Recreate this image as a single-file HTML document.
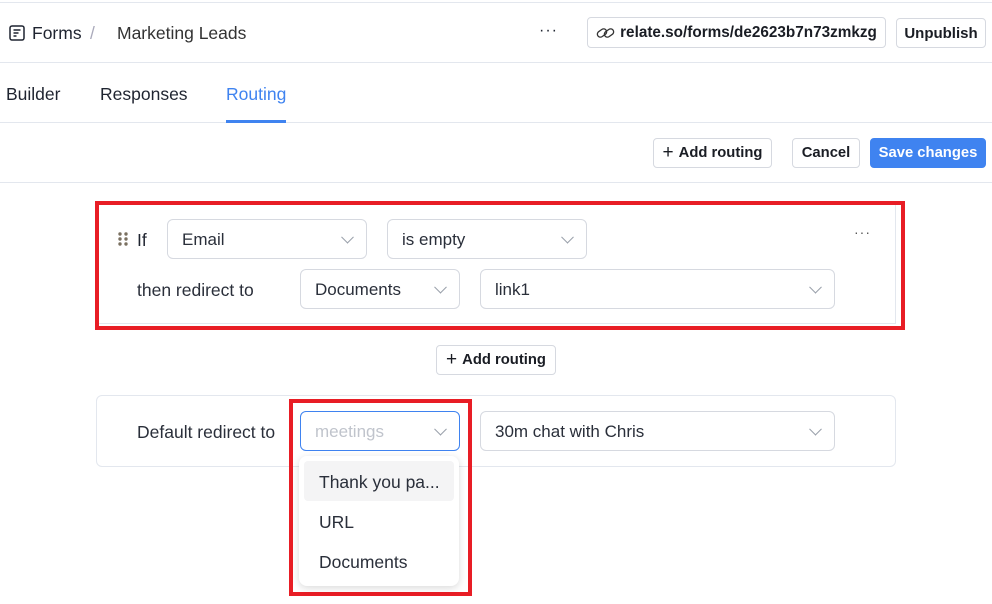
<!DOCTYPE html>
<html><head><style>
*{box-sizing:border-box;margin:0;padding:0}
body{width:992px;height:604px;background:#fff;font-family:"Liberation Sans",sans-serif;color:#1f2430;position:relative;overflow:hidden;font-size:16px}
.a{position:absolute}
.line{position:absolute;left:0;width:992px;height:1px;background:#e3e7ee}
.btn{position:absolute;border:1px solid #d6d9e0;border-radius:4px;background:#fff;font-weight:bold;font-size:14.8px;display:flex;align-items:center;justify-content:center;color:#1a1d24}
.sel{position:absolute;border:1px solid #d6d9e0;border-radius:6px;background:#fff;display:flex;align-items:center;padding-left:14px;font-size:17px;color:#2a2f3a;padding-top:1px}
.chev{position:absolute;right:14px;top:50%;width:9px;height:9px;border-right:1.3px solid #9aa0ab;border-bottom:1.3px solid #9aa0ab;transform:translateY(-70%) rotate(45deg)}
.t{font-size:17.5px}
</style></head><body>
<div class="line" style="top:2px"></div>
<div class="line" style="top:62px"></div>
<div class="line" style="top:122px"></div>
<div class="line" style="top:182px"></div>
<svg class="a" style="left:9px;top:25px" width="16" height="16" viewBox="0 0 16 16"><rect x="1" y="1" width="14" height="14" rx="2" fill="none" stroke="#1f2430" stroke-width="1.5"/><path d="M4.5 5h7M4.5 8h5M4.5 11h3" stroke="#1f2430" stroke-width="1.4"/></svg>
<div class="a t" style="left:32px;top:23px">Forms</div>
<div class="a t" style="left:90px;top:23px;color:#aab">/</div>
<div class="a t" style="left:117px;top:23px;color:#333">Marketing Leads</div>
<div class="a" style="left:539px;top:22px;font-size:16px;letter-spacing:1px">···</div>
<div class="btn" style="left:587px;top:17px;width:299px;height:31px;font-size:15.3px"><svg width="20" height="14" viewBox="0 0 20 14" style="margin-right:4px"><g fill="none" stroke="#333" stroke-width="1.3"><rect x="1" y="4" width="10" height="6" rx="3" transform="rotate(-35 6 7)"/><rect x="8" y="4" width="10" height="6" rx="3" transform="rotate(-35 13 7)"/></g></svg>relate.so/forms/de2623b7n73zmkzg</div>
<div class="btn" style="left:896px;top:18px;width:90px;height:30px;font-size:15px">Unpublish</div>
<div class="a t" style="left:6px;top:84px">Builder</div>
<div class="a t" style="left:100px;top:84px">Responses</div>
<div class="a t" style="left:226px;top:84px;color:#3f83f0">Routing</div>
<div class="a" style="left:226px;top:120px;width:60px;height:3px;background:#3f83f0"></div>
<div class="btn" style="left:653px;top:138px;width:119px;height:30px"><span style="font-weight:normal;font-size:19px;margin-right:5px">+</span>Add routing</div>
<div class="btn" style="left:792px;top:138px;width:68px;height:30px">Cancel</div>
<div class="btn" style="left:870px;top:138px;width:116px;height:30px;background:#3f83f0;border-color:#3f83f0;color:#fff">Save changes</div>

<div class="a" style="left:95px;top:201px;width:810px;height:129px;border:4px solid #e81d25"></div>
<div class="a" style="left:99px;top:323px;width:797px;height:1px;background:#e3e7ee"></div>
<div class="a" style="left:895px;top:205px;width:1px;height:119px;background:#e3e7ee"></div>
<svg class="a" style="left:117px;top:231px" width="12" height="16"><g fill="#7a7060"><circle cx="3" cy="3" r="1.7"/><circle cx="9" cy="3" r="1.7"/><circle cx="3" cy="8" r="1.7"/><circle cx="9" cy="8" r="1.7"/><circle cx="3" cy="13" r="1.7"/><circle cx="9" cy="13" r="1.7"/></g></svg>
<div class="a t" style="left:137px;top:230px">If</div>
<div class="sel" style="left:167px;top:219px;width:200px;height:40px">Email<span class="chev"></span></div>
<div class="sel" style="left:387px;top:219px;width:200px;height:40px">is empty<span class="chev"></span></div>
<div class="a" style="left:854px;top:224px;font-size:14px;letter-spacing:1px;color:#555">···</div>
<div class="a t" style="left:137px;top:280px;color:#2a2f3a">then redirect to</div>
<div class="sel" style="left:300px;top:269px;width:160px;height:40px">Documents<span class="chev"></span></div>
<div class="sel" style="left:480px;top:269px;width:355px;height:40px">link1<span class="chev"></span></div>

<div class="btn" style="left:436px;top:345px;width:120px;height:30px"><span style="font-weight:normal;font-size:19px;margin-right:5px">+</span>Add routing</div>

<div class="a" style="left:96px;top:395px;width:800px;height:72px;border:1px solid #e3e7ee;border-radius:6px"></div>
<div class="a t" style="left:137px;top:422px;color:#2a2f3a">Default redirect to</div>
<div class="sel" style="left:300px;top:411px;width:160px;height:40px;border-color:#3f83f0;color:#c0c4cc">meetings<span class="chev"></span></div>
<div class="sel" style="left:480px;top:411px;width:355px;height:40px">30m chat with Chris<span class="chev"></span></div>

<div class="a" style="left:289px;top:399px;width:183px;height:197px;border:4px solid #e81d25"></div>
<div class="a" style="left:299px;top:456px;width:160px;height:130px;background:#fff;border-radius:8px;box-shadow:0 2px 8px rgba(0,0,0,.15)"></div>
<div class="a" style="left:304px;top:461px;width:150px;height:40px;background:#f4f4f5;border-radius:4px"></div>
<div class="a t" style="left:319px;top:472px;color:#2a2f3a">Thank you pa...</div>
<div class="a t" style="left:319px;top:512px;color:#2a2f3a">URL</div>
<div class="a t" style="left:319px;top:552px;color:#2a2f3a">Documents</div>
</body></html>
